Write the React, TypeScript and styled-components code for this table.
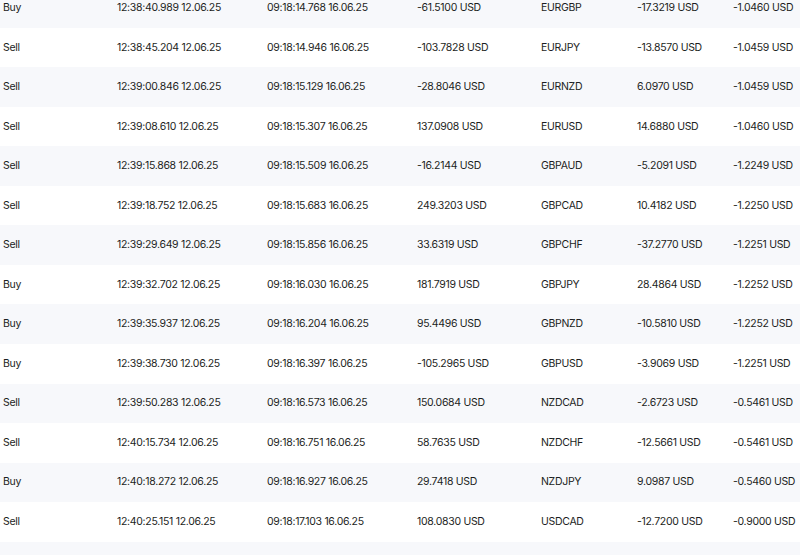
import React from "react";
import styled, { createGlobalStyle } from "styled-components";

const Global = createGlobalStyle`
  html, body { margin: 0; padding: 0; background: #ffffff; }
  body { font-family: Inter, "Noto Sans", sans-serif; color: #1c1e22; overflow: hidden; }
`;

const Table = styled.div`
  margin-top: -11.8px;
  width: 800px;
  display: flex;
  flex-direction: column;
`;

const Row = styled.div<{ $shade: boolean }>`
  display: grid;
  grid-template-columns: 114px 150px 150px 124px 96px 96px 1fr;
  align-items: center;
  height: 39.54px;
  padding-left: 3px;
  background: ${(p) => (p.$shade ? "#f7f8fb" : "#ffffff")};
`;

const Cell = styled.div`
  font-size: 10.5px;
  line-height: 14px;
  white-space: nowrap;
  letter-spacing: -0.3px;
`;

const rows: string[][] = [
  ["Buy", "12:38:40.989 12.06.25", "09:18:14.768 16.06.25", "-61.5100 USD", "EURGBP", "-17.3219 USD", "-1.0460 USD"],
  ["Sell", "12:38:45.204 12.06.25", "09:18:14.946 16.06.25", "-103.7828 USD", "EURJPY", "-13.8570 USD", "-1.0459 USD"],
  ["Sell", "12:39:00.846 12.06.25", "09:18:15.129 16.06.25", "-28.8046 USD", "EURNZD", "6.0970 USD", "-1.0459 USD"],
  ["Sell", "12:39:08.610 12.06.25", "09:18:15.307 16.06.25", "137.0908 USD", "EURUSD", "14.6880 USD", "-1.0460 USD"],
  ["Sell", "12:39:15.868 12.06.25", "09:18:15.509 16.06.25", "-16.2144 USD", "GBPAUD", "-5.2091 USD", "-1.2249 USD"],
  ["Sell", "12:39:18.752 12.06.25", "09:18:15.683 16.06.25", "249.3203 USD", "GBPCAD", "10.4182 USD", "-1.2250 USD"],
  ["Sell", "12:39:29.649 12.06.25", "09:18:15.856 16.06.25", "33.6319 USD", "GBPCHF", "-37.2770 USD", "-1.2251 USD"],
  ["Buy", "12:39:32.702 12.06.25", "09:18:16.030 16.06.25", "181.7919 USD", "GBPJPY", "28.4864 USD", "-1.2252 USD"],
  ["Buy", "12:39:35.937 12.06.25", "09:18:16.204 16.06.25", "95.4496 USD", "GBPNZD", "-10.5810 USD", "-1.2252 USD"],
  ["Buy", "12:39:38.730 12.06.25", "09:18:16.397 16.06.25", "-105.2965 USD", "GBPUSD", "-3.9069 USD", "-1.2251 USD"],
  ["Sell", "12:39:50.283 12.06.25", "09:18:16.573 16.06.25", "150.0684 USD", "NZDCAD", "-2.6723 USD", "-0.5461 USD"],
  ["Sell", "12:40:15.734 12.06.25", "09:18:16.751 16.06.25", "58.7635 USD", "NZDCHF", "-12.5661 USD", "-0.5461 USD"],
  ["Buy", "12:40:18.272 12.06.25", "09:18:16.927 16.06.25", "29.7418 USD", "NZDJPY", "9.0987 USD", "-0.5460 USD"],
  ["Sell", "12:40:25.151 12.06.25", "09:18:17.103 16.06.25", "108.0830 USD", "USDCAD", "-12.7200 USD", "-0.9000 USD"],
  ["", "", "", "", "", "", ""],
];

export default function App() {
  return (
    <>
      <Global />
      <Table>
        {rows.map((r, i) => (
          <Row key={i} $shade={i % 2 === 0}>
            {r.map((c, j) => (
              <Cell key={j}>{c}</Cell>
            ))}
          </Row>
        ))}
      </Table>
    </>
  );
}
